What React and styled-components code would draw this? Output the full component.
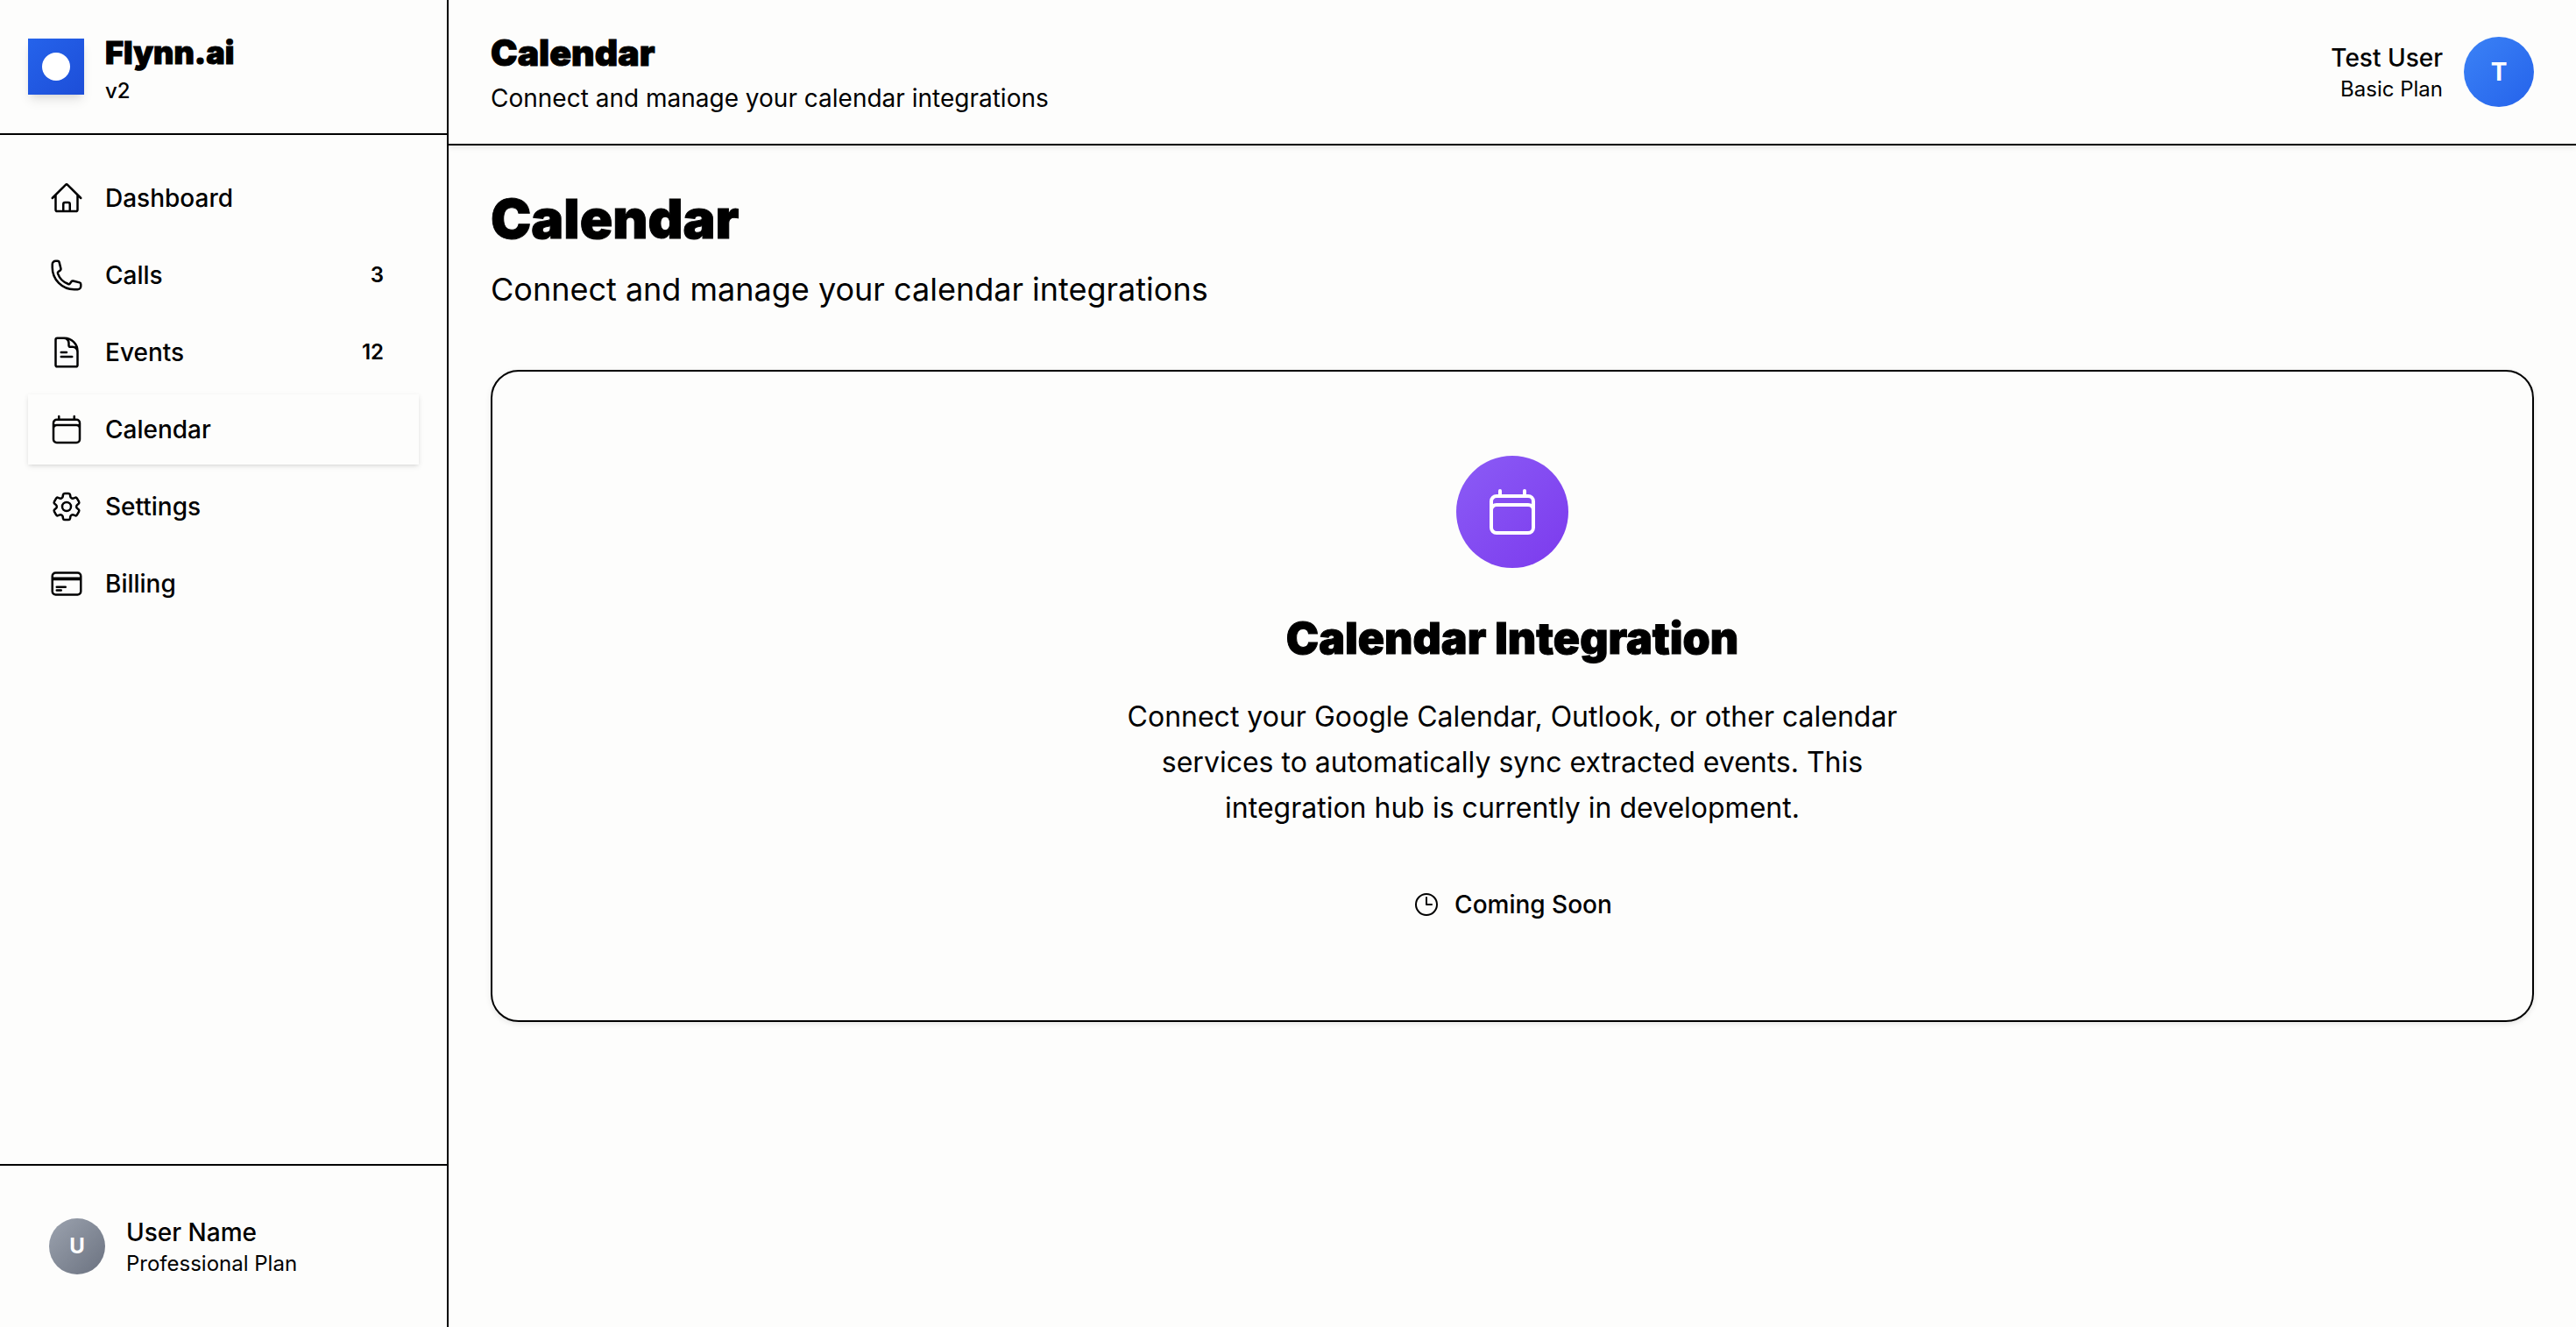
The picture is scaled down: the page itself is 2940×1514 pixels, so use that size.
import React from "react";
import styled, { createGlobalStyle } from "styled-components";
import {
  HiOutlineHome,
  HiOutlinePhone,
  HiOutlineCalendar,
  HiOutlineCog6Tooth,
  HiOutlineCreditCard,
  HiOutlineClock,
} from "react-icons/hi2";

const GlobalStyle = createGlobalStyle`
  *, *::before, *::after { box-sizing: border-box; }
  body {
    margin: 0;
    background: #fdfdfc;
    color: #000;
    font-family: Inter, "Liberation Sans", sans-serif;
    font-size: 28px;
    line-height: 40px;
    -webkit-font-smoothing: antialiased;
  }
  h1, h2, h3, p, ul { margin: 0; padding: 0; }
`;

const Shell = styled.div`
  display: flex;
  min-height: 100vh;
`;

const Sidebar = styled.aside`
  flex: 0 0 512px;
  display: flex;
  flex-direction: column;
  border-right: 2px solid #000;
`;

const Brand = styled.div`
  display: flex;
  align-items: center;
  gap: 24px;
  padding: 32px;
  border-bottom: 2px solid #000;
`;

const Logo = styled.span`
  display: grid;
  place-items: center;
  width: 64px;
  height: 64px;
  background: linear-gradient(135deg, #2563eb, #1d4ed8);
  box-shadow: 0 8px 12px -2px rgba(0, 0, 0, 0.1), 0 4px 8px -4px rgba(0, 0, 0, 0.1);

  &::after {
    content: "";
    width: 32px;
    height: 32px;
    border-radius: 50%;
    background: #fff;
  }
`;

const Stack = styled.div`
  display: flex;
  flex-direction: column;
  text-align: ${(p) => p.$align || "left"};
`;

const Heading = styled.h2`
  font-weight: 900;
  font-size: ${(p) => p.$size}px;
  line-height: ${(p) => p.$line}px;
  -webkit-text-stroke: 1px currentColor;
`;

const Version = styled.span`
  font-size: 24px;
  line-height: 32px;
  font-weight: 500;
`;

const Nav = styled.nav`
  flex: 1;
  padding: 32px;
`;

const NavList = styled.ul`
  display: flex;
  flex-direction: column;
  gap: 8px;
  list-style: none;
`;

const NavLink = styled.a`
  display: flex;
  align-items: center;
  gap: 24px;
  height: 80px;
  padding: 0 24px;
  color: inherit;
  font-weight: 500;
  text-decoration: none;
  background: #fdfdfc;
  box-shadow: ${(p) =>
    p.$active ? "0 2px 6px rgba(0, 0, 0, 0.1), 0 2px 4px -2px rgba(0, 0, 0, 0.1)" : "none"};

  svg {
    width: 40px;
    height: 40px;
    flex: none;
  }
`;

const Count = styled.span`
  margin-left: auto;
  padding: 0 16px;
  font-size: 24px;
  line-height: 32px;
  font-weight: 600;
`;

const Account = styled.div`
  padding: 32px;
  border-top: 2px solid #000;
`;

const AccountRow = styled.div`
  display: flex;
  align-items: center;
  gap: 24px;
  padding: 24px;
`;

const Avatar = styled.span`
  display: grid;
  place-items: center;
  flex: none;
  width: ${(p) => p.$size}px;
  height: ${(p) => p.$size}px;
  border-radius: 50%;
  color: #fff;
  font-size: ${(p) => p.$font}px;
  font-weight: 700;
  background: linear-gradient(135deg, ${(p) => p.$from}, ${(p) => p.$to});
`;

const PersonName = styled.span`
  font-weight: 500;
  line-height: 40px;
`;

const PersonPlan = styled.span`
  font-size: 24px;
  line-height: 32px;
`;

const Main = styled.div`
  flex: 1;
  min-width: 0;
`;

const TopBar = styled.header`
  display: flex;
  align-items: center;
  justify-content: space-between;
  padding: 32px 48px;
  border-bottom: 2px solid #000;
  box-shadow: 0 2px 6px rgba(0, 0, 0, 0.1);
`;

const TopText = styled.p`
  margin-top: 4px;
`;

const User = styled.div`
  display: flex;
  align-items: center;
  gap: 24px;
`;

const Content = styled.main`
  padding: 48px;
`;

const Lead = styled.p`
  margin-top: 16px;
  font-size: 36px;
  line-height: 56px;
`;

const Card = styled.section`
  display: flex;
  flex-direction: column;
  align-items: center;
  margin-top: 64px;
  padding: 96px;
  border: 2px solid #000;
  border-radius: 32px;
  text-align: center;
  box-shadow: 0 2px 6px rgba(0, 0, 0, 0.1);
`;

const CardIcon = styled.span`
  display: grid;
  place-items: center;
  width: 128px;
  height: 128px;
  margin-bottom: 48px;
  border-radius: 50%;
  color: #fff;
  background: linear-gradient(135deg, #8b5cf6, #7c3aed);

  svg {
    width: 64px;
    height: 64px;
  }
`;

const CardText = styled.p`
  max-width: 896px;
  margin-top: 32px;
  font-size: 32px;
  line-height: 52px;
`;

const Status = styled.p`
  display: flex;
  align-items: center;
  gap: 16px;
  margin-top: 48px;
  padding: 16px 32px;
  font-weight: 500;

  svg {
    width: 32px;
    height: 32px;
  }
`;

const DocumentIcon = () => (
  <svg viewBox="0 0 24 24" fill="none" stroke="currentColor" strokeWidth="1.5" strokeLinecap="round" strokeLinejoin="round" aria-hidden="true">
    <path d="M19.5 14.25v-2.625a3.375 3.375 0 0 0-3.375-3.375h-1.5A1.125 1.125 0 0 1 13.5 7.125v-1.5a3.375 3.375 0 0 0-3.375-3.375H8.25m0 12.75h7.5m-7.5-3H12M10.5 2.25H5.625c-.621 0-1.125.504-1.125 1.125v17.25c0 .621.504 1.125 1.125 1.125h12.75c.621 0 1.125-.504 1.125-1.125V11.25a9 9 0 0 0-9-9Z" />
  </svg>
);

const links = [
  { label: "Dashboard", Icon: HiOutlineHome },
  { label: "Calls", Icon: HiOutlinePhone, count: 3 },
  { label: "Events", Icon: DocumentIcon, count: 12 },
  { label: "Calendar", Icon: HiOutlineCalendar, active: true },
  { label: "Settings", Icon: HiOutlineCog6Tooth },
  { label: "Billing", Icon: HiOutlineCreditCard },
];

export default function App() {
  return (
    <>
      <GlobalStyle />
      <Shell>
        <Sidebar>
          <Brand>
            <Logo />
            <Stack>
              <Heading as="span" $size={36} $line={56}>Flynn.ai</Heading>
              <Version>v2</Version>
            </Stack>
          </Brand>
          <Nav>
            <NavList>
              {links.map(({ label, Icon, count, active }) => (
                <li key={label}>
                  <NavLink href={`#${label.toLowerCase()}`} $active={active} aria-current={active ? "page" : undefined}>
                    <Icon />
                    {label}
                    {count && <Count>{count}</Count>}
                  </NavLink>
                </li>
              ))}
            </NavList>
          </Nav>
          <Account>
            <AccountRow>
              <Avatar $size={64} $font={24} $from="#9ca3af" $to="#6b7280">U</Avatar>
              <Stack>
                <PersonName>User Name</PersonName>
                <PersonPlan>Professional Plan</PersonPlan>
              </Stack>
            </AccountRow>
          </Account>
        </Sidebar>
        <Main>
          <TopBar>
            <Stack>
              <Heading $size={41} $line={56}>Calendar</Heading>
              <TopText>Connect and manage your calendar integrations</TopText>
            </Stack>
            <User>
              <Stack $align="right">
                <PersonName>Test User</PersonName>
                <PersonPlan>Basic Plan</PersonPlan>
              </Stack>
              <Avatar $size={80} $font={28} $from="#3b82f6" $to="#2563eb">T</Avatar>
            </User>
          </TopBar>
          <Content>
            <Heading as="h1" $size={62} $line={72}>Calendar</Heading>
            <Lead>Connect and manage your calendar integrations</Lead>
            <Card>
              <CardIcon>
                <HiOutlineCalendar />
              </CardIcon>
              <Heading as="h3" $size={50} $line={64}>Calendar Integration</Heading>
              <CardText>
                Connect your Google Calendar, Outlook, or other calendar services to automatically sync
                extracted events. This integration hub is currently in development.
              </CardText>
              <Status>
                <HiOutlineClock />
                Coming Soon
              </Status>
            </Card>
          </Content>
        </Main>
      </Shell>
    </>
  );
}
